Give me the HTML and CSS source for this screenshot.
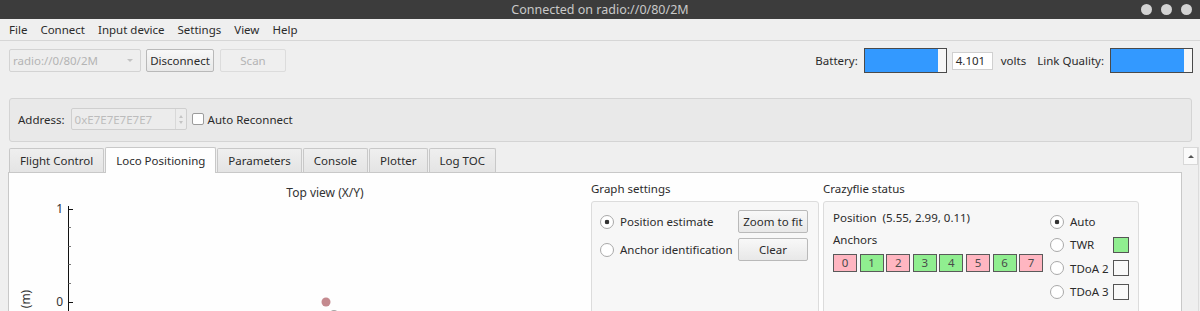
FILE: index.html
```html
<!DOCTYPE html>
<html lang="en">
<head>
    <meta charset="UTF-8">
    <title>Crazyflie PC client</title>
    <link rel="stylesheet" href="styles.css">
</head>
<body>
    <div class="titlebar">
        <span></span>
        <span class="title">Connected on radio://0/80/2M</span>
        <div class="winbtns"><i></i><i></i><i></i></div>
    </div>
    <nav class="menubar">
        <span>File</span>
        <span>Connect</span>
        <span>Input device</span>
        <span>Settings</span>
        <span>View</span>
        <span>Help</span>
    </nav>
    <div class="toolbar">
        <div class="combo">radio://0/80/2M<span class="caret"></span></div>
        <button class="btn disconnect">Disconnect</button>
        <button class="btn scan" disabled>Scan</button>
        <span class="lbl battery">Battery:</span>
        <div class="bar"><div class="fill" style="width: 90%"></div></div>
        <span class="readout">4.101</span>
        <span class="lbl volts">volts</span>
        <span class="lbl link">Link Quality:</span>
        <div class="bar"><div class="fill" style="width: 90%"></div></div>
    </div>
    <div class="addrbox">
        <span>Address:</span>
        <div class="spin">
            <span>0xE7E7E7E7E7</span>
            <div class="arrows"><i class="up"></i><i class="down"></i></div>
        </div>
        <span class="check"></span>
        <span class="checklbl">Auto Reconnect</span>
    </div>
    <div class="main">
        <div class="tabwidget">
            <div class="tabbar">
                <div class="tab">Flight Control</div>
                <div class="tab active">Loco Positioning</div>
                <div class="tab">Parameters</div>
                <div class="tab">Console</div>
                <div class="tab">Plotter</div>
                <div class="tab">Log TOC</div>
            </div>
            <div class="pane">
                <div class="plot">
                    <svg width="572" height="140" viewBox="0 0 572 140">
                        <text x="316" y="24" text-anchor="middle">Top view (X/Y)</text>
                        <line x1="59.5" y1="33" x2="59.5" y2="140" stroke="#111"/>
                        <line x1="59.5" y1="36.5" x2="64" y2="36.5" stroke="#111"/>
                        <line x1="59.5" y1="54.5" x2="62" y2="54.5" stroke="#777"/>
                        <line x1="59.5" y1="73.5" x2="62" y2="73.5" stroke="#777"/>
                        <line x1="59.5" y1="91.5" x2="62" y2="91.5" stroke="#777"/>
                        <line x1="59.5" y1="110.5" x2="62" y2="110.5" stroke="#777"/>
                        <line x1="59.5" y1="129.5" x2="64" y2="129.5" stroke="#111"/>
                        <text x="54" y="40" text-anchor="end">1</text>
                        <text x="54" y="133" text-anchor="end">0</text>
                        <text x="16" y="126" text-anchor="middle" dominant-baseline="central" transform="rotate(-90 16 126)">(m)</text>
                        <circle cx="317" cy="129" r="4.5" fill="#c48a8f"/>
                        <circle cx="325" cy="141" r="4" fill="#a4a4a4"/>
                    </svg>
                </div>
                <section class="group gsettings">
                    <h3>Graph settings</h3>
                    <div class="groupbox">
                        <span class="radio on">Position estimate</span>
                        <button class="btn">Zoom to fit</button>
                        <span class="radio">Anchor identification</span>
                        <button class="btn">Clear</button>
                    </div>
                </section>
                <section class="group cfstatus">
                    <h3>Crazyflie status</h3>
                    <div class="groupbox">
                        <div class="cfleft">
                            <div class="pos">Position <span class="coords">(5.55, 2.99, 0.11)</span></div>
                            <div class="anchorlbl">Anchors</div>
                            <div class="anchors">
                                <span class="anchor bad">0</span>
                                <span class="anchor good">1</span>
                                <span class="anchor bad">2</span>
                                <span class="anchor good">3</span>
                                <span class="anchor good">4</span>
                                <span class="anchor bad">5</span>
                                <span class="anchor good">6</span>
                                <span class="anchor bad">7</span>
                            </div>
                        </div>
                        <div class="modes">
                            <span class="radio on">Auto</span><span></span>
                            <span class="radio">TWR</span><span class="led good"></span>
                            <span class="radio">TDoA 2</span><span class="led"></span>
                            <span class="radio">TDoA 3</span><span class="led"></span>
                        </div>
                    </div>
                </section>
            </div>
        </div>
        <div class="vscroll"><div class="up"></div></div>
    </div>
</body>
</html>
```

FILE: styles.css
```css
*{
    box-sizing: border-box;
}
body{
    margin: 0;
    width: 1200px;
    height: 311px;
    overflow: hidden;
    background: #efefef;
    font-family: "Noto Sans", "Open Sans", sans-serif;
    font-size: 11.5px;
    color: #2b2b2b;
}
.titlebar{
    height: 19px;
    background: #3c3c3c;
    display: grid;
    grid-template-columns: 1fr auto 1fr;
    align-items: center;
}
.title{
    color: #c9c9c9;
    font-size: 12.5px;
}
.winbtns{
    justify-self: end;
    display: flex;
    gap: 9px;
    padding-right: 8px;
}
.winbtns i{
    width: 11px;
    height: 11px;
    border-radius: 50%;
    background: #d3d3d3;
}
.menubar{
    height: 22px;
    border-bottom: 1px solid #d6d6d6;
    display: flex;
    align-items: center;
    gap: 13px;
    padding-left: 9px;
}

/* connect row */
.toolbar{
    height: 25px;
    margin-top: 7px;
    padding: 0 7px 0 9px;
    display: flex;
    align-items: center;
}
.combo{
    width: 132px;
    height: 23px;
    border: 1px solid #d3d3d3;
    border-radius: 2px;
    background: #eeeeee;
    color: #b4b4b4;
    padding-left: 3px;
    display: flex;
    align-items: center;
}
.caret{
    margin-left: auto;
    margin-right: 7px;
    border: 3px solid transparent;
    border-top: 3px solid #c2c2c2;
    border-bottom: none;
}
.btn{
    height: 23px;
    padding: 0 3px;
    border: 1px solid #b9b9b9;
    border-radius: 2px;
    background: linear-gradient(#f8f8f8, #e8e8e8);
    font: inherit;
    color: #2b2b2b;
}
.disconnect{
    width: 68px;
    margin-left: 5px;
}
.scan{
    width: 66px;
    margin-left: 6px;
    border-color: #dcdcdc;
    background: #efefef;
    color: #b4b4b4;
}
.lbl{
    margin-right: 6px;
}
.battery{
    margin-left: auto;
}
.bar{
    width: 83px;
    height: 25px;
    border: 1px solid #4a4a4a;
    background: #f7f7f7;
}
.bar .fill{
    height: 100%;
    background: #3399ff;
}
.readout{
    width: 41px;
    height: 18px;
    margin: 0 8px 0 5px;
    border: 1px solid #d0d0d0;
    background: #ffffff;
    padding-left: 3px;
    line-height: 16px;
}
.volts{
    margin-right: 11px;
}

/* address group */
.addrbox{
    height: 44px;
    margin: 25px 8px 0 9px;
    background: #e9e9e9;
    border: 1px solid #d4d4d4;
    border-radius: 3px;
    display: flex;
    align-items: center;
    padding: 0 0 2px 8px;
}
.spin{
    width: 116px;
    height: 22px;
    margin-left: 6px;
    border: 1px solid #cfcfcf;
    border-radius: 2px;
    background: #ececec;
    color: #bcbcbc;
    padding-left: 3px;
    display: flex;
    align-items: center;
}
.arrows{
    margin-left: auto;
    width: 11px;
    height: 100%;
    border-left: 1px solid #d8d8d8;
    display: flex;
    flex-direction: column;
    justify-content: center;
    align-items: center;
    gap: 3px;
}
.arrows i{
    border: 2.5px solid transparent;
}
.arrows .up{
    border-bottom: 3px solid #c4c4c4;
    border-top: none;
}
.arrows .down{
    border-top: 3px solid #c4c4c4;
    border-bottom: none;
}
.check{
    width: 12px;
    height: 12px;
    margin-left: 5px;
    border: 1px solid #9c9c9c;
    border-radius: 2px;
    background: #ffffff;
}
.checklbl{
    margin-left: 4px;
}

/* tabs */
.main{
    display: flex;
    height: 170px;
    margin: 5px 1px 0 8px;
}
.tabwidget{
    flex: 1;
    display: flex;
    flex-direction: column;
}
.tabbar{
    height: 25px;
    display: flex;
    align-items: flex-end;
    gap: 1px;
    padding-left: 1px;
}
.tab{
    height: 24px;
    padding: 0 10px;
    border: 1px solid #c8c8c8;
    border-bottom: none;
    border-radius: 2px 2px 0 0;
    background: linear-gradient(#efefef, #e4e4e4);
    display: flex;
    align-items: center;
}
.tab.active{
    height: 26px;
    margin-bottom: -1px;
    background: #fefefe;
    position: relative;
}
.pane{
    flex: 1;
    border: 1px solid #c8c8c8;
    border-bottom: none;
    background: #fefefe;
    display: flex;
    align-items: flex-start;
}
.plot{
    width: 572px;
    height: 140px;
}
.plot svg{
    display: block;
}
.plot text{
    font-family: "Noto Sans", sans-serif;
    font-size: 12px;
    fill: #333333;
}
.group{
    padding-top: 8px;
}
.group h3{
    margin: 0 0 4px;
    font: inherit;
    line-height: 16px;
}
.groupbox{
    height: 120px;
    border: 1px solid #dcdcdc;
    border-radius: 3px;
    background: #f7f7f7;
}
.gsettings{
    width: 228px;
    margin-left: 10px;
}
.gsettings .groupbox{
    display: grid;
    grid-template-columns: 1fr 70px;
    grid-auto-rows: 23px;
    row-gap: 5px;
    align-items: center;
    align-content: start;
    padding: 8px 10px 0 8px;
}
.gsettings .btn{
    padding: 0;
}
.radio{
    display: flex;
    align-items: center;
    gap: 6px;
    white-space: nowrap;
}
.radio::before{
    content: "";
    flex: none;
    width: 12px;
    height: 12px;
    border-radius: 50%;
    border: 1px solid #a9a9a9;
    background: #ffffff;
}
.radio.on::before{
    background: radial-gradient(circle, #333333 0 2px, #ffffff 2.6px);
}
.cfstatus{
    width: 316px;
    margin-left: 4px;
}
.cfstatus .groupbox{
    display: flex;
    padding: 8px 9px 0 9px;
}
.cfleft{
    flex: 1;
}
.pos, .anchorlbl{
    line-height: 16px;
}
.coords{
    margin-left: 3px;
}
.anchorlbl{
    margin-top: 6px;
}
.anchors{
    display: flex;
    gap: 2.6px;
    margin-top: 6px;
}
.anchor{
    width: 24px;
    height: 18px;
    border: 1px solid #5a5a5a;
    text-align: center;
    line-height: 16px;
    color: #4a4a4a;
}
.bad{
    background: #ffb6c1;
}
.good{
    background: #90ee90;
}
.modes{
    width: 79px;
    margin-top: 0;
    display: grid;
    grid-template-columns: 63px 16px;
    grid-auto-rows: 23.3px;
    align-items: center;
    align-content: start;
}
.led{
    width: 16px;
    height: 16px;
    border: 1px solid #555555;
}
.led:not(.good){
    background: #f9f9f9;
}

/* scrollbar */
.vscroll{
    width: 16px;
    margin-left: 1px;
    background: #efefef;
    border-right: 1px solid #dcdcdc;
}
.vscroll .up{
    height: 18px;
    border: 1px solid #d8d8d8;
    background: #fafafa;
    display: flex;
    justify-content: center;
    align-items: center;
}
.vscroll .up::before{
    content: "";
    border: 3px solid transparent;
    border-bottom: 3px solid #555555;
    border-top: none;
}
```
